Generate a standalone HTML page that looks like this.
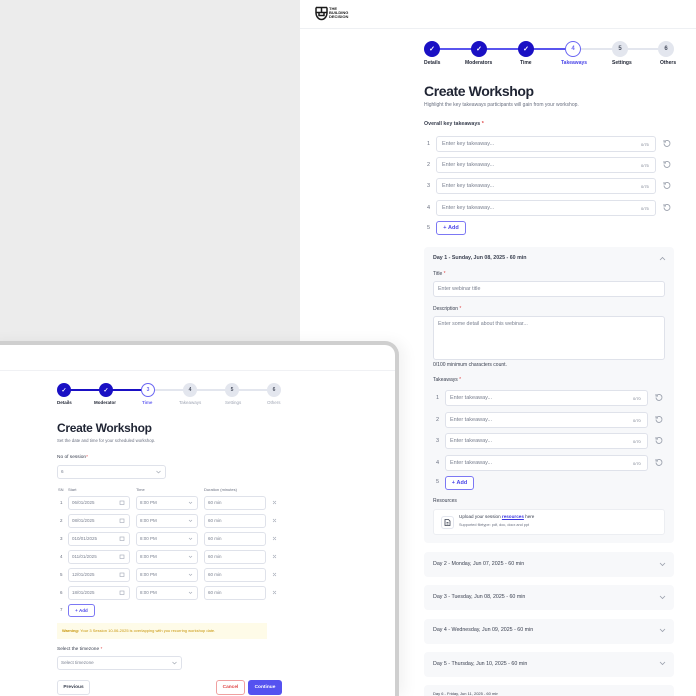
<!DOCTYPE html>
<html><head><meta charset="utf-8"><style>
*{margin:0;padding:0;box-sizing:border-box}
html,body{width:696px;height:696px;overflow:hidden}
body{position:relative;background:#fff;font-family:"Liberation Sans",sans-serif;color:#1f2433}
#w{position:absolute;left:0;top:0;width:696px;height:696px;overflow:hidden}
.a{position:absolute}
.t{position:absolute;white-space:nowrap;line-height:1}
.inp{position:absolute;background:#fff;border:1px solid #dfe2ea;border-radius:3px}
.ph{position:absolute;white-space:nowrap;line-height:1;color:#7a8090}
.circ{position:absolute;border-radius:50%;display:flex;align-items:center;justify-content:center;font-weight:bold}
.done{background:#1a10c4;color:#fff}
.todo{background:#e3e6ee;color:#4a5060}
.cur{background:#fff;border:1px solid #6a66f2;color:#6a66f2}
.addb{position:absolute;border:1px solid #7c78f4;border-radius:3px;color:#4b46e8;background:#fff;display:flex;align-items:center;justify-content:center;font-weight:bold}
.acc{position:absolute;left:424px;width:250px;background:#f7f8fa;border-radius:4px}
</style></head><body><div id="w">
<div class="a" style="left:0;top:0;width:300px;height:341px;background:#ececec"></div>
<div class="a" style="left:300px;top:28px;width:396px;height:1px;background:#eef0f3"></div>
<svg class="a" style="left:315px;top:6px" width="13" height="15" viewBox="0 0 13 15"><path d="M1 1.5h11M1 1.5v5h11v-5M1 6.5c0 4 2.5 7 5.5 7s5.5-3 5.5-7M4 6.5v3h5v-3M6.5 1.5v5" fill="none" stroke="#1a1a1a" stroke-width="1.5"/></svg>
<div class="t" style="left:329px;top:7px;font-size:4px;font-weight:bold;line-height:4px;color:#1a1a1a">THE<br>BUILDING<br>DECISION</div>

<div class="a" style="left:432px;top:48px;width:141px;height:1.5px;background:#5a55ee"></div>
<div class="a" style="left:573px;top:48px;width:93px;height:1.5px;background:#e3e6ee"></div>
<div class="circ done" style="left:424px;top:41px;width:16px;height:16px;font-size:7px">✓</div>
<div class="circ done" style="left:471px;top:41px;width:16px;height:16px;font-size:7px">✓</div>
<div class="circ done" style="left:518px;top:41px;width:16px;height:16px;font-size:7px">✓</div>
<div class="circ cur" style="left:565px;top:41px;width:16px;height:16px;font-size:6px">4</div>
<div class="circ todo" style="left:612px;top:41px;width:16px;height:16px;font-size:6px">5</div>
<div class="circ todo" style="left:658px;top:41px;width:16px;height:16px;font-size:6px">6</div>
<div class="t" style="left:424px;top:61px;font-size:5px;font-weight:bold">Details</div>
<div class="t" style="left:465px;top:61px;font-size:5px;font-weight:bold">Moderators</div>
<div class="t" style="left:520px;top:61px;font-size:5px;font-weight:bold">Time</div>
<div class="t" style="left:561px;top:61px;font-size:5px;font-weight:bold;color:#4b46e8">Takeaways</div>
<div class="t" style="left:612px;top:61px;font-size:5px;font-weight:bold">Settings</div>
<div class="t" style="left:660px;top:61px;font-size:5px;font-weight:bold">Others</div>

<div class="t" style="left:424px;top:84px;font-size:14px;font-weight:bold;letter-spacing:-0.4px">Create Workshop</div>
<div class="t" style="left:424px;top:103px;font-size:5px;color:#6a7080">Highlight the key takeaways participants will gain from your workshop.</div>
<div class="t" style="left:424px;top:122px;font-size:5.3px;font-weight:bold;color:#3a4050">Overall key takeaways <span style="color:#e04848">*</span></div>

<div class="t" style="left:427px;top:142px;font-size:5.5px;color:#6a7080">1</div>
<div class="inp" style="left:436px;top:136px;width:220px;height:16px"></div><div class="ph" style="left:442px;top:142px;font-size:5.5px">Enter key takeaway...</div><div class="ph" style="left:641px;top:143px;font-size:4px">0/75</div>
<div class="t" style="left:427px;top:163px;font-size:5.5px;color:#6a7080">2</div>
<div class="inp" style="left:436px;top:157px;width:220px;height:16px"></div><div class="ph" style="left:442px;top:163px;font-size:5.5px">Enter key takeaway...</div><div class="ph" style="left:641px;top:164px;font-size:4px">0/75</div>
<div class="t" style="left:427px;top:184px;font-size:5.5px;color:#6a7080">3</div>
<div class="inp" style="left:436px;top:178px;width:220px;height:16px"></div><div class="ph" style="left:442px;top:184px;font-size:5.5px">Enter key takeaway...</div><div class="ph" style="left:641px;top:185px;font-size:4px">0/75</div>
<div class="t" style="left:427px;top:206px;font-size:5.5px;color:#6a7080">4</div>
<div class="inp" style="left:436px;top:200px;width:220px;height:16px"></div><div class="ph" style="left:442px;top:206px;font-size:5.5px">Enter key takeaway...</div><div class="ph" style="left:641px;top:207px;font-size:4px">0/75</div>
<svg class="a" style="left:662px;top:139px" width="9" height="80" viewBox="0 0 9 80"><g fill="none" stroke="#9aa0ac" stroke-width="0.9"><path d="M2 4.5a3 3 0 1 0 1-2.3M2 1v2h2"/><path d="M2 25.5a3 3 0 1 0 1-2.3M2 22v2h2"/><path d="M2 46.5a3 3 0 1 0 1-2.3M2 43v2h2"/><path d="M2 68.5a3 3 0 1 0 1-2.3M2 65v2h2"/></g></svg>
<div class="t" style="left:427px;top:226px;font-size:5.5px;color:#6a7080">5</div>
<div class="addb" style="left:436px;top:221px;width:30px;height:14px;font-size:5.5px">+&nbsp;Add</div>

<div class="acc" style="top:247px;height:296px"></div>
<div class="t" style="left:433px;top:256px;font-size:5.3px;font-weight:bold;color:#3a4050">Day 1 - Sunday, Jun 08, 2025 - 60 min</div>
<svg class="a" style="left:659px;top:256px" width="7" height="5"><path d="M1 4l2.5-2.5L6 4" fill="none" stroke="#9aa0ac" stroke-width="0.8"/></svg>
<div class="t" style="left:433px;top:272px;font-size:5px;color:#3a4050">Title <span style="color:#e04848">*</span></div>
<div class="inp" style="left:433px;top:281px;width:232px;height:16px"></div><div class="ph" style="left:438px;top:287px;font-size:5.3px">Enter webinar title</div>
<div class="t" style="left:433px;top:307px;font-size:5px;color:#3a4050">Description <span style="color:#e04848">*</span></div>
<div class="inp" style="left:433px;top:316px;width:232px;height:44px"></div><div class="ph" style="left:438px;top:322px;font-size:5.3px">Enter some detail about this webinar...</div>
<div class="t" style="left:433px;top:363px;font-size:5px;color:#3a4050">0/100 minimum characters count.</div>
<div class="t" style="left:433px;top:378px;font-size:5px;color:#3a4050">Takeaways <span style="color:#e04848">*</span></div>
<div class="t" style="left:436px;top:396px;font-size:5.5px;color:#6a7080">1</div>
<div class="inp" style="left:445px;top:390px;width:203px;height:16px"></div><div class="ph" style="left:450px;top:396px;font-size:5.5px">Enter takeaway...</div><div class="ph" style="left:633px;top:397px;font-size:4px">0/70</div>
<div class="t" style="left:436px;top:418px;font-size:5.5px;color:#6a7080">2</div>
<div class="inp" style="left:445px;top:412px;width:203px;height:16px"></div><div class="ph" style="left:450px;top:418px;font-size:5.5px">Enter takeaway...</div><div class="ph" style="left:633px;top:419px;font-size:4px">0/70</div>
<div class="t" style="left:436px;top:439px;font-size:5.5px;color:#6a7080">3</div>
<div class="inp" style="left:445px;top:433px;width:203px;height:16px"></div><div class="ph" style="left:450px;top:439px;font-size:5.5px">Enter takeaway...</div><div class="ph" style="left:633px;top:440px;font-size:4px">0/70</div>
<div class="t" style="left:436px;top:461px;font-size:5.5px;color:#6a7080">4</div>
<div class="inp" style="left:445px;top:455px;width:203px;height:16px"></div><div class="ph" style="left:450px;top:461px;font-size:5.5px">Enter takeaway...</div><div class="ph" style="left:633px;top:462px;font-size:4px">0/70</div>
<svg class="a" style="left:654px;top:393px" width="9" height="80" viewBox="0 0 9 80"><g fill="none" stroke="#9aa0ac" stroke-width="0.9"><path d="M2 4.5a3 3 0 1 0 1-2.3M2 1v2h2"/><path d="M2 26.5a3 3 0 1 0 1-2.3M2 23v2h2"/><path d="M2 47.5a3 3 0 1 0 1-2.3M2 44v2h2"/><path d="M2 69.5a3 3 0 1 0 1-2.3M2 66v2h2"/></g></svg>
<div class="t" style="left:436px;top:480px;font-size:5.5px;color:#6a7080">5</div>
<div class="addb" style="left:445px;top:476px;width:29px;height:14px;font-size:5.5px">+&nbsp;Add</div>
<div class="t" style="left:433px;top:499px;font-size:5px;color:#3a4050">Resources</div>
<div class="inp" style="left:433px;top:509px;width:232px;height:26px;border-color:#eceef2"></div>
<div class="a" style="left:441px;top:516px;width:13px;height:13px;border:1px solid #e3e6ee;border-radius:3px;background:#fff"></div>
<svg class="a" style="left:444px;top:519px" width="7" height="7"><path d="M1 .5h3.5L6 2v4.5H1z M2.5 3.5h2M2.5 5h2" fill="none" stroke="#3a4050" stroke-width="0.8"/></svg>
<div class="t" style="left:459px;top:515px;font-size:4.6px;color:#3a4050">Upload your session <span style="color:#3a36e0;font-weight:bold;text-decoration:underline">resources</span> here</div>
<div class="t" style="left:459px;top:524px;font-size:3.8px;color:#6a7080">Supported filetype: pdf, doc, docx and ppt</div>

<div class="acc" style="top:552px;height:25px"></div><div class="t" style="left:433px;top:562px;font-size:5.3px;color:#3a4050">Day 2 - Monday, Jun 07, 2025 - 60 min</div>
<div class="acc" style="top:585px;height:25px"></div><div class="t" style="left:433px;top:595px;font-size:5.3px;color:#3a4050">Day 3 - Tuesday, Jun 08, 2025 - 60 min</div>
<div class="acc" style="top:619px;height:25px"></div><div class="t" style="left:433px;top:628px;font-size:5.3px;color:#3a4050">Day 4 - Wednesday, Jun 09, 2025 - 60 min</div>
<div class="acc" style="top:652px;height:25px"></div><div class="t" style="left:433px;top:662px;font-size:5.3px;color:#3a4050">Day 5 - Thursday, Jun 10, 2025 - 60 min</div>
<div class="acc" style="top:685px;height:11px;border-radius:4px 4px 0 0"></div><div class="t" style="left:433px;top:692px;font-size:4px;line-height:4px;height:4px;overflow:hidden;color:#3a4050">Day 6 - Friday, Jun 11, 2025 - 60 min</div>
<svg class="a" style="left:659px;top:562px" width="7" height="110"><g fill="none" stroke="#9aa0ac" stroke-width="0.8"><path d="M1 1l2.5 2.5L6 1"/><path d="M1 34l2.5 2.5L6 34"/><path d="M1 67l2.5 2.5L6 67"/><path d="M1 100l2.5 2.5L6 100"/></g></svg>

<div class="a" style="left:-20px;top:341px;width:419px;height:355px;border:4px solid #cfcfcf;border-bottom:none;border-radius:14px 14px 0 0;background:#fff;box-shadow:6px 0 14px rgba(0,0,0,0.05)"></div>
<div class="a" style="left:0;top:370px;width:395px;height:1px;background:#f0f1f4"></div>

<div class="a" style="left:64px;top:389px;width:84px;height:1.5px;background:#1a10c4"></div>
<div class="a" style="left:148px;top:389px;width:126px;height:1.5px;background:#e3e6ee"></div>
<div class="circ done" style="left:57px;top:383px;width:14px;height:14px;font-size:6px">✓</div>
<div class="circ done" style="left:99px;top:383px;width:14px;height:14px;font-size:6px">✓</div>
<div class="circ cur" style="left:141px;top:383px;width:14px;height:14px;font-size:5px">3</div>
<div class="circ todo" style="left:183px;top:383px;width:14px;height:14px;font-size:5px">4</div>
<div class="circ todo" style="left:225px;top:383px;width:14px;height:14px;font-size:5px">5</div>
<div class="circ todo" style="left:267px;top:383px;width:14px;height:14px;font-size:5px">6</div>
<div class="t" style="left:57px;top:401px;font-size:4.5px;font-weight:bold">Details</div>
<div class="t" style="left:94px;top:401px;font-size:4.5px;font-weight:bold">Moderator</div>
<div class="t" style="left:142px;top:401px;font-size:4.5px;font-weight:bold;color:#6a66f2">Time</div>
<div class="t" style="left:179px;top:401px;font-size:4.5px;color:#a0a6b4">Takeaways</div>
<div class="t" style="left:225px;top:401px;font-size:4.5px;color:#a0a6b4">Settings</div>
<div class="t" style="left:267px;top:401px;font-size:4.5px;color:#a0a6b4">Others</div>

<div class="t" style="left:57px;top:422px;font-size:12px;font-weight:bold;letter-spacing:-0.3px">Create Workshop</div>
<div class="t" style="left:57px;top:439px;font-size:4.3px;color:#6a7080">Set the date and time for your scheduled workshop.</div>
<div class="t" style="left:57px;top:456px;font-size:4.8px;color:#3a4050">No of session<span style="color:#e04848">*</span></div>
<div class="inp" style="left:57px;top:465px;width:109px;height:14px"></div><div class="ph" style="left:61px;top:470px;font-size:4.6px">6</div>
<svg class="a" style="left:156px;top:470px" width="5" height="4"><path d="M.5 1l2 2 2-2" fill="none" stroke="#9aa0ac" stroke-width="0.6"/></svg>
<div class="t" style="left:58px;top:488px;font-size:4px;color:#6a7080">SN</div>
<div class="t" style="left:68px;top:488px;font-size:4px;color:#6a7080">Start</div>
<div class="t" style="left:136px;top:488px;font-size:4px;color:#6a7080">Time</div>
<div class="t" style="left:204px;top:488px;font-size:4px;color:#6a7080">Duration (minutes)</div>

<div class="t" style="left:60px;top:501px;font-size:4.5px;color:#6a7080">1</div><div class="inp" style="left:68px;top:496px;width:62px;height:14px"></div><div class="ph" style="left:72px;top:501px;font-size:4.5px">06/01/2025</div><div class="inp" style="left:136px;top:496px;width:62px;height:14px"></div><div class="ph" style="left:140px;top:501px;font-size:4.5px">8:00 PM</div><div class="inp" style="left:204px;top:496px;width:62px;height:14px"></div><div class="ph" style="left:208px;top:501px;font-size:4.5px">60 min</div>
<div class="t" style="left:60px;top:519px;font-size:4.5px;color:#6a7080">2</div><div class="inp" style="left:68px;top:514px;width:62px;height:14px"></div><div class="ph" style="left:72px;top:519px;font-size:4.5px">08/01/2025</div><div class="inp" style="left:136px;top:514px;width:62px;height:14px"></div><div class="ph" style="left:140px;top:519px;font-size:4.5px">8:00 PM</div><div class="inp" style="left:204px;top:514px;width:62px;height:14px"></div><div class="ph" style="left:208px;top:519px;font-size:4.5px">60 min</div>
<div class="t" style="left:60px;top:537px;font-size:4.5px;color:#6a7080">3</div><div class="inp" style="left:68px;top:532px;width:62px;height:14px"></div><div class="ph" style="left:72px;top:537px;font-size:4.5px">010/01/2025</div><div class="inp" style="left:136px;top:532px;width:62px;height:14px"></div><div class="ph" style="left:140px;top:537px;font-size:4.5px">8:00 PM</div><div class="inp" style="left:204px;top:532px;width:62px;height:14px"></div><div class="ph" style="left:208px;top:537px;font-size:4.5px">60 min</div>
<div class="t" style="left:60px;top:555px;font-size:4.5px;color:#6a7080">4</div><div class="inp" style="left:68px;top:550px;width:62px;height:14px"></div><div class="ph" style="left:72px;top:555px;font-size:4.5px">011/01/2025</div><div class="inp" style="left:136px;top:550px;width:62px;height:14px"></div><div class="ph" style="left:140px;top:555px;font-size:4.5px">8:00 PM</div><div class="inp" style="left:204px;top:550px;width:62px;height:14px"></div><div class="ph" style="left:208px;top:555px;font-size:4.5px">60 min</div>
<div class="t" style="left:60px;top:573px;font-size:4.5px;color:#6a7080">5</div><div class="inp" style="left:68px;top:568px;width:62px;height:14px"></div><div class="ph" style="left:72px;top:573px;font-size:4.5px">12/01/2025</div><div class="inp" style="left:136px;top:568px;width:62px;height:14px"></div><div class="ph" style="left:140px;top:573px;font-size:4.5px">8:00 PM</div><div class="inp" style="left:204px;top:568px;width:62px;height:14px"></div><div class="ph" style="left:208px;top:573px;font-size:4.5px">60 min</div>
<div class="t" style="left:60px;top:591px;font-size:4.5px;color:#6a7080">6</div><div class="inp" style="left:68px;top:586px;width:62px;height:14px"></div><div class="ph" style="left:72px;top:591px;font-size:4.5px">18/01/2025</div><div class="inp" style="left:136px;top:586px;width:62px;height:14px"></div><div class="ph" style="left:140px;top:591px;font-size:4.5px">8:00 PM</div><div class="inp" style="left:204px;top:586px;width:62px;height:14px"></div><div class="ph" style="left:208px;top:591px;font-size:4.5px">60 min</div>
<svg class="a" style="left:0;top:496px" width="290" height="110"><g fill="none" stroke="#a0a6b4" stroke-width="0.6">
<g id="r"><rect x="120" y="5" width="4" height="3.5"/><path d="M189 6l1.5 1.5L192 6M273 5l3 3M276 5l-3 3"/></g>
<use href="#r" y="18"/><use href="#r" y="36"/><use href="#r" y="54"/><use href="#r" y="72"/><use href="#r" y="90"/></g></svg>
<div class="t" style="left:60px;top:608px;font-size:4.5px;color:#6a7080">7</div>
<div class="addb" style="left:68px;top:604px;width:27px;height:13px;font-size:4.5px">+&nbsp;Add</div>
<div class="a" style="left:57px;top:623px;width:210px;height:16px;background:#fefbe8"></div>
<div class="t" style="left:62px;top:629px;font-size:4px;color:#c8960a"><b>Warning:</b> Your 3 Session 10-06-2025 is overlapping with you recurring workshop date.</div>
<div class="t" style="left:57px;top:648px;font-size:4.8px;color:#3a4050">Select the timezone <span style="color:#e04848">*</span></div>
<div class="inp" style="left:57px;top:656px;width:125px;height:14px"></div><div class="ph" style="left:61px;top:661px;font-size:4.6px">Select timezone</div>
<svg class="a" style="left:172px;top:661px" width="5" height="4"><path d="M.5 1l2 2 2-2" fill="none" stroke="#9aa0ac" stroke-width="0.6"/></svg>
<div class="inp" style="left:57px;top:680px;width:33px;height:15px;display:flex;align-items:center;justify-content:center;font-size:4.8px;font-weight:bold;color:#3a4050">Previous</div>
<div class="inp" style="left:216px;top:680px;width:29px;height:15px;border-color:#f0a0a0;display:flex;align-items:center;justify-content:center;font-size:4.8px;font-weight:bold;color:#e04848">Cancel</div>
<div class="a" style="left:248px;top:680px;width:34px;height:15px;background:#5552f0;border-radius:3px;display:flex;align-items:center;justify-content:center;font-size:4.8px;font-weight:bold;color:#fff">Continue</div>
</div></body></html>
